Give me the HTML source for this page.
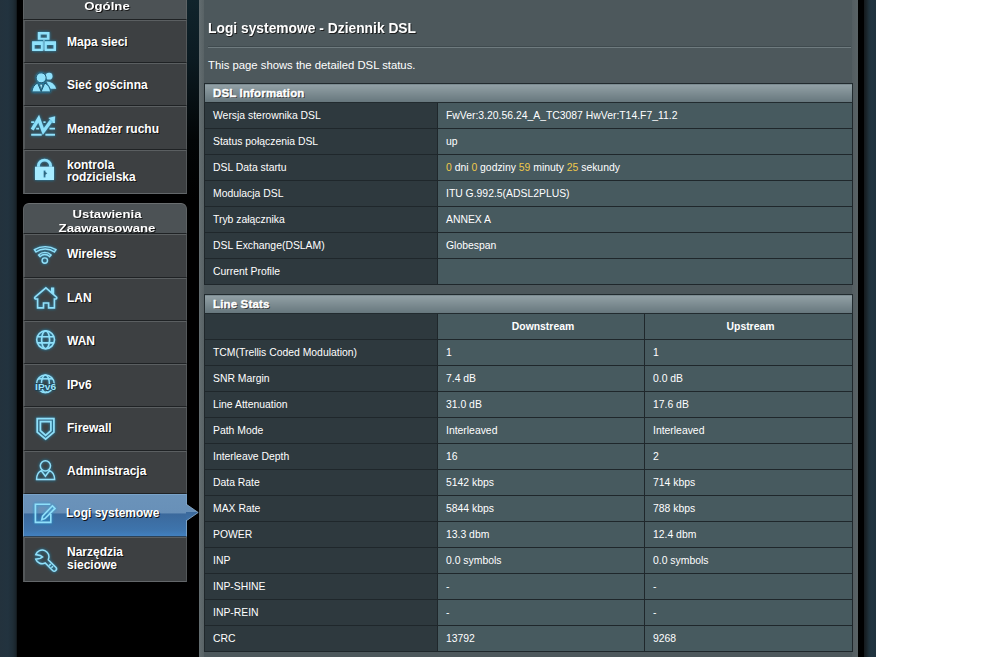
<!DOCTYPE html>
<html><head><meta charset="utf-8"><style>
*{box-sizing:border-box}
html,body{margin:0;padding:0}
body{width:999px;height:657px;overflow:hidden;position:relative;background:#fff;font-family:"Liberation Sans",sans-serif}
div{position:absolute}
.lbg{left:0;top:0;width:17px;height:657px;background:linear-gradient(90deg,#23323d 0px,#22333f 8px,#1f2d36 13px,#1a252c 15.5px,#111619 17px)}
.blk{left:17px;top:0;width:182px;height:657px;background:#000}
.strip{left:187px;top:0;width:12px;height:657px;background:linear-gradient(#10242c 0px,#0b1a21 60px,#020506 140px,#000 200px)}
.cont{left:199px;top:0;width:659px;height:657px;background:linear-gradient(90deg,#636d70 0px,#586265 5px,#4d585c 5px,#4d585c 653px,#535d61 653px,#5a6366 659px)}
.rblk{left:858px;top:0;width:6px;height:657px;background:#000}
.rbg{left:864px;top:0;width:12px;height:657px;background:linear-gradient(90deg,#14191c 0px,#1b262c 3px,#1f313b 5px,#213541 8px,#1f323d 12px)}
.mh{left:23px;width:164px;background:#4c5255;border-left:1px solid #5e6365;border-right:1px solid #5e6365;border-bottom:1px solid #1f2224}
.mht{left:23px;width:168px;text-align:center;color:#fff;font-weight:bold;font-size:11px;line-height:14px;transform:scaleX(1.2);transform-origin:50% 0;text-shadow:1px 1px 0 #1a1a1a;white-space:nowrap}
.mi{left:23px;width:164px;background:#3d4042;border-top:1px solid #5b5f61;border-bottom:1px solid #1f2224;border-left:2px solid #54585a;border-right:1px solid #54585a}
.mi.last{border-bottom:1px solid #63676a}
.mi.sel{background:linear-gradient(#6b93ba 0%,#6890b8 44%,#3b699c 46%,#3e74ac 85%,#4281c0 100%);border-top:1px solid #7aa3c9;border-left:1px solid #79a0c4;border-right:1px solid #79a0c4;border-bottom:1px solid #2c4257}
.mt{color:#fff;font-weight:bold;font-size:12px;line-height:13px;white-space:nowrap;text-shadow:1px 1px 0 #141414}
.arrow{position:absolute;left:186px;top:504px;width:13px;height:17px}
svg.icons{position:absolute;left:0;top:0;width:200px;height:600px}
svg .fill{fill:#8fe1fb;stroke:none;filter:url(#glow)}
svg .line{fill:none;stroke:#8ee0fa;filter:url(#glow)}
svg .gl{filter:url(#glow)}
.title{left:208px;top:18.5px;color:#fff;font-weight:bold;font-size:15px;line-height:17px;transform:scaleX(0.921);transform-origin:0 0;white-space:nowrap;text-shadow:1px 1px 0 #1e1e1e}
.hr1{left:208px;top:46px;width:643px;height:1px;background:#3f4a4e}
.hr2{left:208px;top:47px;width:643px;height:1px;background:#6f7b7f}
.desc{left:208px;top:58px;color:#fff;font-size:11.3px;line-height:14px;white-space:nowrap}
table{position:absolute;left:204px;width:649px;border-collapse:collapse;font-size:10.4px;color:#fff;table-layout:fixed}
thead td{height:19px;padding:0 0 1px 8px;font-weight:bold;font-size:11.5px;letter-spacing:0.15px;-webkit-text-stroke:0.35px #fff;background:linear-gradient(#93a1a6,#66767c);border:1px solid #222b2f;text-shadow:1px 1px 0 #333}
th{font-weight:normal;text-align:left;background:#2e393e;border:1px solid #1f272b;height:26px;padding:0 0 0 8px;width:233px;white-space:nowrap}
td{background:#475a5f;border:1px solid #1f272b;height:26px;padding:0 0 0 8px;white-space:nowrap}
tr.h td{text-align:center;font-weight:bold;padding:0 0 0 4px}
.y{color:#efc94a}
</style></head><body>
<div class="lbg"></div><div class="blk"></div><div class="strip"></div>
<div class="cont"></div><div class="rblk"></div><div class="rbg"></div>
<div class="mh" style="top:-4px;height:24px"></div>
<div class="mht" style="top:-1.3px">Ogólne</div>
<div class="mh" style="top:203px;height:31px;border-top:1px solid #6a6e70;border-radius:6px 6px 0 0"></div>
<div class="mht" style="top:206.8px">Ustawienia<br>Zaawansowane</div>
<div class="mi" style="top:20px;height:43px"></div><div class="mt" style="left:67px;top:36.1px">Mapa sieci</div><div class="mi" style="top:63px;height:43px"></div><div class="mt" style="left:67px;top:78.5px">Sieć gościnna</div><div class="mi" style="top:106px;height:44px"></div><div class="mt" style="left:67px;top:122.6px">Menadżer ruchu</div><div class="mi last" style="top:150px;height:44px"></div><div class="mt" style="left:67px;top:158.6px">kontrola</div><div class="mt" style="left:67px;top:171.4px">rodzicielska</div><div class="mi" style="top:234px;height:44px"></div><div class="mt" style="left:67px;top:248.0px">Wireless</div><div class="mi" style="top:278px;height:43px"></div><div class="mt" style="left:67px;top:292.0px">LAN</div><div class="mi" style="top:321px;height:43px"></div><div class="mt" style="left:67px;top:334.9px">WAN</div><div class="mi" style="top:364px;height:43px"></div><div class="mt" style="left:67px;top:378.7px">IPv6</div><div class="mi" style="top:407px;height:44px"></div><div class="mt" style="left:67px;top:421.9px">Firewall</div><div class="mi" style="top:451px;height:43px"></div><div class="mt" style="left:67px;top:465.1px">Administracja</div><div class="mi sel" style="top:494px;height:43px"></div><div class="mt" style="left:66px;top:506.5px">Logi systemowe</div><div class="mi last" style="top:537px;height:45px"></div><div class="mt" style="left:67px;top:545.5px">Narzędzia</div><div class="mt" style="left:67px;top:558.9px">sieciowe</div>
<svg class="arrow" viewBox="0 0 13 17"><defs><linearGradient id="ag" x1="0" y1="0" x2="0" y2="1"><stop offset="0" stop-color="#6890b8"/><stop offset="0.5" stop-color="#6890b8"/><stop offset="0.5" stop-color="#3b699c"/><stop offset="1" stop-color="#3e72a8"/></linearGradient></defs><path d="M0 0 L12.2 8.5 L0 17 Z" fill="url(#ag)"/><path d="M0 0 L12.2 8.5 L0 17" fill="none" stroke="#8fb2d2" stroke-width="0.8"/></svg>
<svg class="icons" viewBox="0 0 200 600"><defs><filter id="glow" x="-50%" y="-50%" width="200%" height="200%"><feGaussianBlur in="SourceAlpha" stdDeviation="1.6" result="b"/><feFlood flood-color="#1aa0d8" flood-opacity="0.9"/><feComposite in2="b" operator="in" result="g"/><feMerge><feMergeNode in="g"/><feMergeNode in="SourceGraphic"/></feMerge></filter></defs>
<g class="fill">
 <path d="M37.8 31.9h11.7v7.9h-11.7z M40.6 34.6v3.2h6.3v-3.2z" fill-rule="evenodd"/>
 <path d="M32.1 41.2h10.8v9.7h-10.8z M34.6 44.9v3.9h6.3v-3.9z" fill-rule="evenodd"/>
 <path d="M44.8 41.2h11.2v9.7h-11.2z M46.8 44.9v3.9h6.7v-3.9z" fill-rule="evenodd"/>
 <rect x="43.3" y="39.6" width="1.3" height="11" opacity="0.75"/>
</g>
<g class="fill">
 <circle cx="49.1" cy="76.2" r="3.4"/>
 <path d="M46.5 81.6 Q53.5 81.5 56.2 88.8 L50.5 88.8 Z"/>
 <circle cx="41.15" cy="77.85" r="5" stroke="#1a4a60" stroke-width="0.9"/>
 <path d="M31.9 91.9 Q32.6 85.5 37.6 83 L41.2 91.5 L44.8 83 Q49.9 85.5 50.6 91.9 Z" stroke="#1a4a60" stroke-width="0.9"/>
 <path d="M39.6 84.2 L42.8 84.2 L41.2 90.2Z" fill="#b8f2ff" stroke="#1a4a60" stroke-width="0.7"/>
</g>
<g class="line" stroke-width="3.3" stroke-linejoin="miter" style="stroke:#8fe1fb">
 <path d="M32.2 129.6 L38.7 118.6 L43.3 131.6 L51.5 120.2"/>
</g>
<g class="fill">
 <path d="M55.2 116.2 L54.6 123.2 L48.4 118 Z"/>
 <rect x="31.2" y="121.3" width="3" height="1.7"/><rect x="43.4" y="121.3" width="2.2" height="1.7"/><rect x="52.4" y="121.3" width="2.6" height="1.7"/>
 <rect x="36.2" y="127.8" width="2.8" height="1.7"/><rect x="49.5" y="127.8" width="5.5" height="1.7"/>
 <rect x="31.2" y="133.8" width="10.5" height="1.9"/><rect x="45.4" y="133.8" width="9.6" height="1.9"/>
</g>
<g class="fill">
 <path d="M37 166.8 V165.6 A7.5 6.9 0 0 1 52 165.6 V166.8 H49.1 V165.4 A4.6 3.9 0 0 0 39.9 165.4 V166.8 Z"/>
 <path d="M35 166.7 H54 V180 H35 Z M43.6 170.6 v6.8 h1.9 v-2.6 l1.9 -1.6 l-1.9 -1.3 v-1.3 z" fill-rule="evenodd" style="fill:#a6ebff"/>
</g>
<g class="line" stroke-width="1.4">
 <path d="M34.4 249.7 A20.4 20.4 0 0 1 56 249.7 L54.4 252 A15.4 15.4 0 0 0 36 252 Z"/>
 <path d="M38.6 255 A8.8 8.8 0 0 1 51.1 255 L49.6 256.6 A6.4 6.4 0 0 0 40.1 256.6 Z"/>
 <circle cx="44.8" cy="260.6" r="2.7"/>
</g>
<g class="line" stroke-width="1.6">
 <path d="M37.6 307.9 V299 H35.4 Q34 298.3 35 297.2 L45.9 287.9 L51.8 293 V288.4 H53.4 V294.4 L56.6 297.2 Q57.2 298.4 55.9 299 H54.4 V307.9 H48.6 V303 H43.5 V307.9 Z"/>
</g>
<g class="line" stroke-width="1.6">
 <circle cx="45.6" cy="339.8" r="8.9"/>
 <ellipse cx="45.6" cy="339.8" rx="4" ry="8.9"/>
 <path d="M37.2 336.7 H54 M37.2 342.9 H54"/>
</g>
<g class="line" stroke-width="1.5">
 <circle cx="45.4" cy="383.8" r="8.8"/>
 <ellipse cx="45.4" cy="383.8" rx="4" ry="8.8"/>
 <path d="M37.8 378.8 H53"/>
</g>
<text x="45.6" y="389.6" text-anchor="middle" font-family="Liberation Sans" font-weight="bold" font-size="9" fill="#9be4fb" stroke="#1d3f50" stroke-width="1.6" paint-order="stroke" textLength="21" lengthAdjust="spacingAndGlyphs">IPv6</text>
<g class="line" stroke-width="1.7">
 <path d="M37.2 418.6 H53.9 V432.2 L45.6 439.2 L37.2 432.2 Z"/>
 <path d="M40.4 421.6 H50.9 V430.6 L45.6 435.4 L40.4 430.6 Z"/>
</g>
<g class="line" stroke-width="1.5">
 <circle cx="45.4" cy="465.8" r="5.1"/>
 <path d="M36.6 479.6 Q36.6 472.5 41.2 470.6 L45.4 476.3 L49.6 470.6 Q54.6 472.5 54.6 479.6 Z"/>
</g>
<g class="line" stroke-width="1.6">
 <path d="M50.3 504.3 H35.4 V522.4 H50.8 V514"/>
 <path d="M52.4 505.8 L55 508.4 L45.2 518.4 L41.8 519.8 L42.6 516.2 Z"/>
</g>
<g class="line" stroke-width="1.5">
 <path d="M35.8 554.6 A6.8 6.8 0 1 1 48.3 559.9 L55.8 567.3 A2.2 2.2 0 0 1 52.6 570.5 L45.2 563 A6.8 6.8 0 0 1 35.8 559.2 L40.3 558.4 L42.5 556.9 L40.3 555.4 Z"/>
 <path d="M49.2 565.6 L50.8 564 M51.4 567.8 L53 566.2"/>
</g>
</svg>
<div class="title">Logi systemowe - Dziennik DSL</div>
<div class="hr1"></div><div class="hr2"></div>
<div class="desc">This page shows the detailed DSL status.</div>
<table style="top:83px"><colgroup><col style="width:233px"><col></colgroup><thead><tr><td colspan="2">DSL Information</td></tr></thead><tbody><tr><th>Wersja sterownika DSL</th><td>FwVer:3.20.56.24_A_TC3087 HwVer:T14.F7_11.2</td></tr><tr><th>Status połączenia DSL</th><td>up</td></tr><tr><th>DSL Data startu</th><td><span class="y">0</span> dni <span class="y">0</span> godziny <span class="y">59</span> minuty <span class="y">25</span> sekundy</td></tr><tr><th>Modulacja DSL</th><td>ITU G.992.5(ADSL2PLUS)</td></tr><tr><th>Tryb załącznika</th><td>ANNEX A</td></tr><tr><th>DSL Exchange(DSLAM)</th><td>Globespan</td></tr><tr><th>Current Profile</th><td></td></tr></tbody></table>
<table style="top:294px"><colgroup><col style="width:233px"><col style="width:207px"><col></colgroup><thead><tr><td colspan="3">Line Stats</td></tr></thead><tbody><tr class="h"><th></th><td>Downstream</td><td>Upstream</td></tr><tr><th>TCM(Trellis Coded Modulation)</th><td>1</td><td>1</td></tr><tr><th>SNR Margin</th><td>7.4 dB</td><td>0.0 dB</td></tr><tr><th>Line Attenuation</th><td>31.0 dB</td><td>17.6 dB</td></tr><tr><th>Path Mode</th><td>Interleaved</td><td>Interleaved</td></tr><tr><th>Interleave Depth</th><td>16</td><td>2</td></tr><tr><th>Data Rate</th><td>5142 kbps</td><td>714 kbps</td></tr><tr><th>MAX Rate</th><td>5844 kbps</td><td>788 kbps</td></tr><tr><th>POWER</th><td>13.3 dbm</td><td>12.4 dbm</td></tr><tr><th>INP</th><td>0.0 symbols</td><td>0.0 symbols</td></tr><tr><th>INP-SHINE</th><td>-</td><td>-</td></tr><tr><th>INP-REIN</th><td>-</td><td>-</td></tr><tr><th>CRC</th><td>13792</td><td>9268</td></tr></tbody></table>
</body></html>
